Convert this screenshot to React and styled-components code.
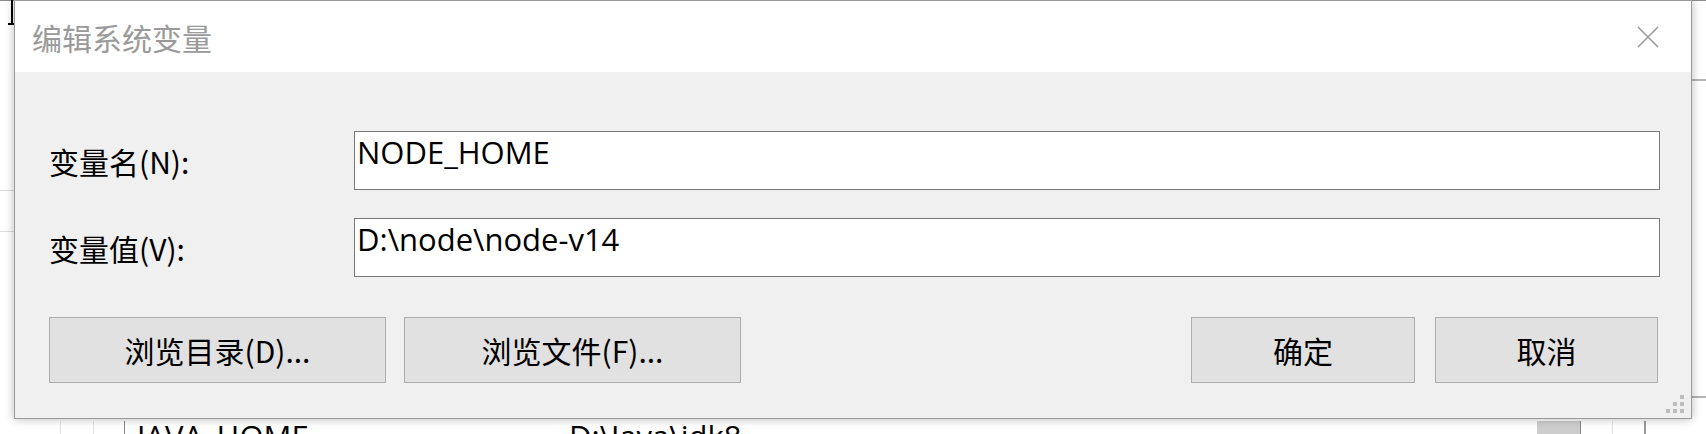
import React from 'react';
import styled, { createGlobalStyle } from 'styled-components';

const GlobalStyle = createGlobalStyle`
  html, body { margin: 0; padding: 0; background: #fff; }
  #root { width: 1706px; height: 434px; }
`;

const cjk = `"Noto Sans CJK SC", "Noto Sans", sans-serif`;
const latin = `"Open Sans", "Noto Sans", sans-serif`;

const Screen = styled.div`
  position: relative;
  width: 1706px;
  height: 434px;
  overflow: hidden;
  background: #fff;
`;

// the window that sits under the dialog
const Backdrop = styled.div`
  display: grid;
  grid-template-columns: 14px 1fr 14px;
  grid-template-rows: 420px 1fr;
  height: 100%;
  box-sizing: border-box;
  border-top: 1px solid #8e8e8e;
`;

const SideStrip = styled.div`
  display: flex;
  flex-direction: column;
  padding-top: ${p => p.$top}px;
  gap: ${p => p.$gap}px;
`;

const StripLine = styled.div`
  height: ${p => p.$h || 1}px;
  background: ${p => p.$color || '#dcdcdc'};
`;

const Cursor = styled.svg`
  position: absolute;
  left: 7px;
  top: 0;
`;

const ListRow = styled.div`
  grid-column: 1 / -1;
  display: flex;
  height: 100%;
`;

const Cell = styled.div`
  flex: ${p => (p.$grow ? 1 : 'none')};
  width: ${p => (p.$w ? p.$w + 'px' : 'auto')};
  box-sizing: border-box;
  border-right: ${p => p.$line || 'none'};
  background: ${p => p.$bg || 'transparent'};
  padding-left: ${p => p.$pad || 0}px;
  font-family: ${latin};
  font-size: 31px;
  line-height: 31px;
  color: #000;
  white-space: nowrap;
`;

const Dialog = styled.div`
  position: absolute;
  left: 14px;
  top: 0;
  width: 1678px;
  height: 419px;
  box-sizing: border-box;
  border: 1px solid #9a9a9a;
  background: #f0f0f0;
  box-shadow: 0 0 9px rgba(0, 0, 0, 0.28);
  display: flex;
  flex-direction: column;
`;

const TitleBar = styled.div`
  height: 71px;
  flex: none;
  background: #fff;
  display: flex;
  align-items: center;
  justify-content: space-between;
  padding: 0 32px 0 17px;
`;

const Title = styled.div`
  font-family: ${cjk};
  font-size: 30px;
  color: #9a9a9a;
`;

const Body = styled.div`
  position: relative;
  flex: 1;
  padding: 59px 31px 35px 34px;
  display: flex;
  flex-direction: column;
`;

const Fields = styled.div`
  display: grid;
  grid-template-columns: 305px 1fr;
  grid-auto-rows: 59px;
  row-gap: 28px;
  align-items: center;
`;

const Label = styled.div`
  font-family: ${cjk};
  font-size: 30px;
  color: #000;
`;

const TextBox = styled.div`
  height: 100%;
  box-sizing: border-box;
  border: 1px solid #7a7a7a;
  background: #fff;
  padding: 5px 2px;
  font-family: ${latin};
  font-size: 31px;
  line-height: 31px;
  color: #000;
`;

const ButtonRow = styled.div`
  display: flex;
  margin-top: 40px;
  margin-right: 2px;
  gap: 18px;
`;

const Spacer = styled.div`
  flex: 1;
`;

const Button = styled.button`
  width: ${p => p.$w}px;
  height: 66px;
  margin-left: ${p => p.$ml || 0}px;
  box-sizing: border-box;
  border: 1px solid #adadad;
  background: #e1e1e1;
  font-family: ${cjk};
  font-size: 30px;
  color: #000;
  padding: 0;
`;

const Grip = styled.svg`
  position: absolute;
  right: 7px;
  bottom: 5px;
`;

function CloseIcon() {
  return (
    <svg width="22" height="22" viewBox="0 0 22 22">
      <path d="M1 1 L21 21 M21 1 L1 21" stroke="#9a9a9a" strokeWidth="1.6" fill="none" />
    </svg>
  );
}

function App() {
  const dots = [[14, 0], [7, 7], [14, 7], [0, 14], [7, 14], [14, 14]];
  return (
    <Screen>
      <GlobalStyle />
      <Backdrop>
        <SideStrip $top={189} $gap={40}>
          <StripLine />
          <StripLine />
        </SideStrip>
        <div />
        <SideStrip $top={78} $gap={315}>
          <StripLine $h={2} $color="#b4b4b4" />
          <StripLine $h={2} $color="#b4b4b4" />
        </SideStrip>
        <ListRow>
          <Cell $w={61} $line="1px solid #e2e2e2" />
          <Cell $w={33} $line="1px solid #e2e2e2" />
          <Cell $w={31} $line="1px solid #8a8a8a" />
          <Cell $w={444} $pad={12}>JAVA_HOME</Cell>
          <Cell $grow>D:\Java\jdk8</Cell>
          <Cell $w={44} $bg="#cdcdcd" $line="1px solid #8a8a8a" />
          <Cell $w={32} $line="1px solid #e2e2e2" />
          <Cell $w={33} $line="2px solid #9a9a9a" />
          <Cell $w={60} />
        </ListRow>
      </Backdrop>
      <Cursor width="10" height="26" viewBox="0 0 10 26">
        <path d="M5 0 V24 M1 24 H9" stroke="#000" strokeWidth="2" fill="none" />
      </Cursor>

      <Dialog>
        <TitleBar>
          <Title>编辑系统变量</Title>
          <CloseIcon />
        </TitleBar>
        <Body>
          <Fields>
            <Label>变量名(N):</Label>
            <TextBox>NODE_HOME</TextBox>
            <Label>变量值(V):</Label>
            <TextBox>D:\node\node-v14</TextBox>
          </Fields>
          <ButtonRow>
            <Button $w={337}>浏览目录(D)...</Button>
            <Button $w={337}>浏览文件(F)...</Button>
            <Spacer />
            <Button $w={224}>确定</Button>
            <Button $w={223} $ml={2}>取消</Button>
          </ButtonRow>
          <Grip width="18" height="18" viewBox="0 0 18 18">
            {dots.map(([x, y]) => (
              <rect key={`${x}-${y}`} x={x} y={y} width="4" height="4" fill="#bdbdbd" />
            ))}
          </Grip>
        </Body>
      </Dialog>
    </Screen>
  );
}

export default App;
